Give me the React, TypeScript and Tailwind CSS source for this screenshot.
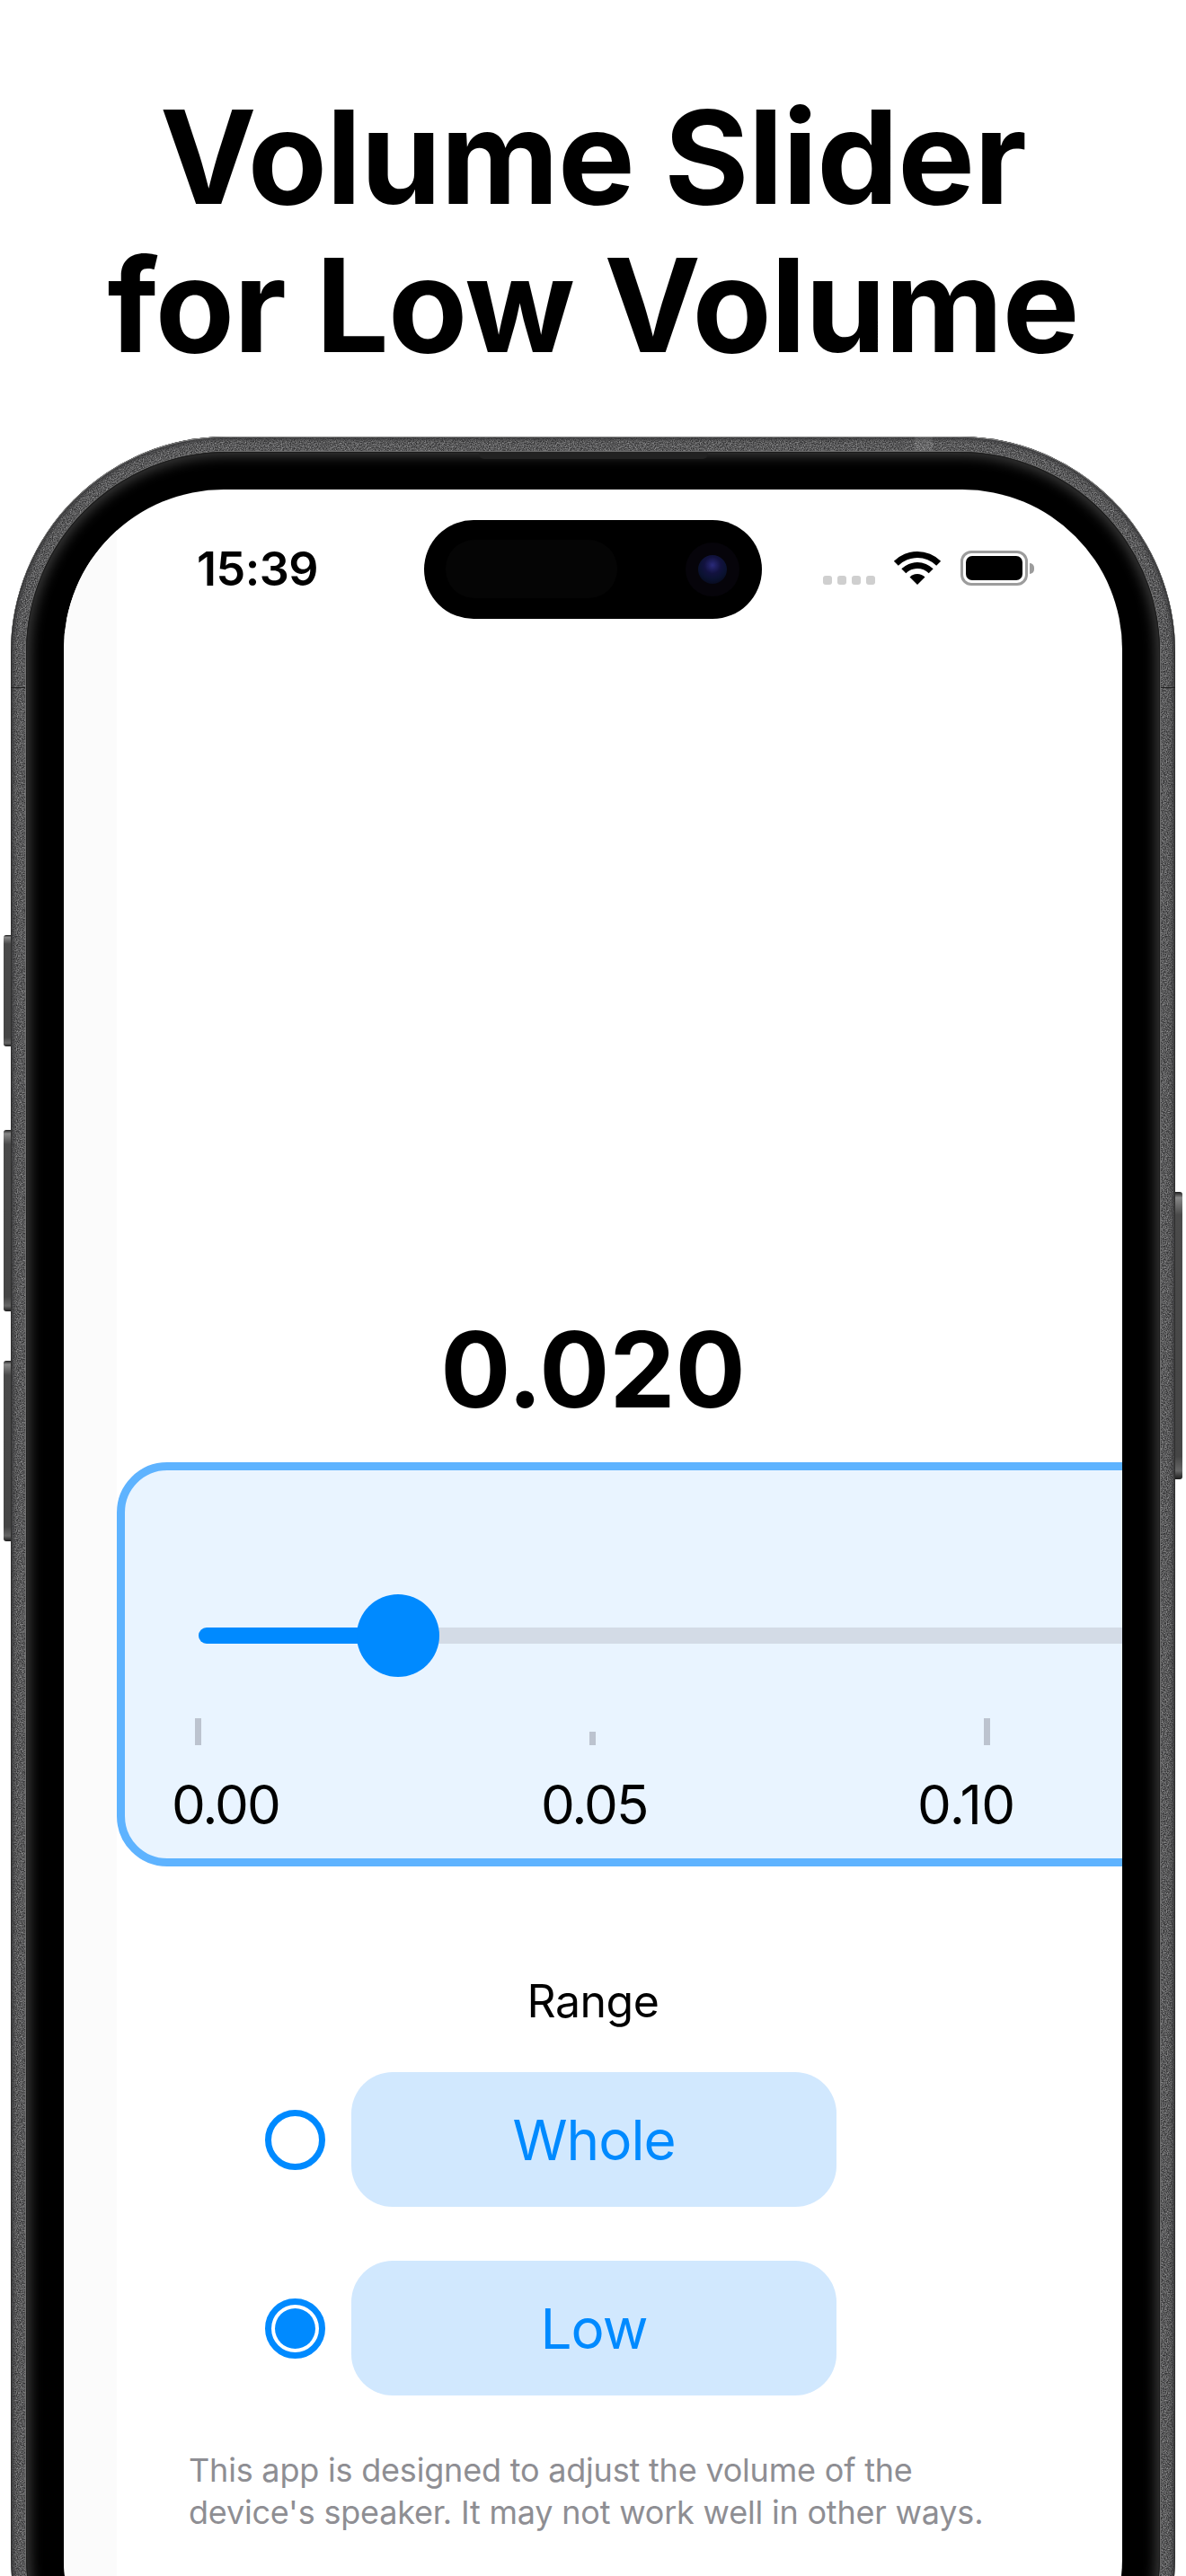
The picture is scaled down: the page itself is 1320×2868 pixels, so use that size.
import React from 'react'

const sideButton = 'absolute w-[9px] bg-[linear-gradient(to_bottom,#1c1c1c_0%,#888_2%,#4a4a4a_8%,#454545_92%,#666_97%,#1c1c1c_100%)]'

const WifiIcon = () => (
  <svg viewBox="0 0 50 37" className="w-[50px] h-[37px] overflow-visible" fill="#000">
    <path d="M-1.16 10.84A37 37 0 0 1 51.16 10.84L46.2 15.8A30 30 0 0 0 3.8 15.8Z" />
    <path d="M7.32 19.32A25 25 0 0 1 42.68 19.32L37.73 24.27A18 18 0 0 0 12.27 24.27Z" />
    <path d="M16.51 28.51A12 12 0 0 1 33.49 28.51L25 37Z" />
  </svg>
)

const Battery = () => (
  <div className="flex items-center gap-[2px]">
    <div className="w-[75px] h-[39px] rounded-[12px] border-[3px] border-[#9c9c9c] p-[3px]">
      <div className="w-full h-full rounded-[7px] bg-black" />
    </div>
    <div className="w-[5px] h-[12px] rounded-r-full bg-[#9c9c9c]" />
  </div>
)

const Option = ({ label, selected }: { label: string; selected?: boolean }) => (
  <div className="flex items-center gap-[29px] pl-[165px]">
    <div className="w-[67px] h-[67px] rounded-full border-[7px] border-[#008aff] bg-white p-[4px]">
      {selected && <div className="w-full h-full rounded-full bg-[#008aff]" />}
    </div>
    <div className="w-[540px] h-[150px] rounded-[46px] bg-[#d1e8fe] flex items-center justify-center text-[62px] tracking-[-1px] text-[#008aff]">
      {label}
    </div>
  </div>
)

export default function App() {
  return (
    <div className="h-[2868px] overflow-hidden bg-white pt-[92px] font-['Inter',sans-serif] text-black">
      <h1 className="text-center text-[144px] leading-[165px] font-bold tracking-[-0.8px]">
        Volume Slider
        <br />
        for Low Volume
      </h1>

      {/* phone */}
      <div className="relative mx-auto mt-[64px] w-[1296px] h-[2600px] rounded-[240px] bg-[#5a5a5c] p-[17px]">
        <div className={`${sideButton} left-[-8px] top-[555px] h-[124px] rounded-l-[3px]`} />
        <div className={`${sideButton} left-[-8px] top-[772px] h-[202px] rounded-l-[3px]`} />
        <div className={`${sideButton} left-[-8px] top-[1029px] h-[201px] rounded-l-[3px]`} />
        <div className={`${sideButton} right-[-8px] top-[841px] h-[320px] rounded-r-[3px]`} />

        {/* metal grain */}
        <div className="absolute inset-0 overflow-hidden rounded-[240px]">
          <svg className="w-full h-full">
            <filter id="grain" colorInterpolationFilters="sRGB">
              <feTurbulence type="fractalNoise" baseFrequency="0.8" numOctaves="2" />
              <feColorMatrix values="1.6 0 0 0 -0.45 1.6 0 0 0 -0.45 1.6 0 0 0 -0.45 0 0 0 0 0.45" />
            </filter>
            <rect width="100%" height="100%" filter="url(#grain)" />
          </svg>
        </div>
        <div className="absolute inset-0 rounded-[240px] shadow-[inset_0_1px_0_#8c8c8c,inset_0_0_0_1px_#303030,inset_0_0_4px_3px_#38383a]" />
        <div className="absolute left-[1006px] top-0 w-[20px] h-[17px] bg-[#ffffff18]" />
        <div className="absolute left-0 top-[279px] w-[17px] h-[1px] bg-[#222]" />
        <div className="absolute right-0 top-[279px] w-[17px] h-[1px] bg-[#222]" />

        <div className="relative h-full rounded-[223px] bg-black p-[42px] shadow-[0_0_0_1px_#6e6e6e,inset_0_0_0_1px_#1c1c1c,inset_0_0_14px_5px_#3a3a3a]">
          <div className="absolute left-[504px] top-0 w-[255px] h-[8px] rounded-b-[6px] bg-[#222]" />

          {/* screen */}
          <div className="relative flex h-full overflow-hidden rounded-[178px] bg-white">
            <div className="w-[59px] shrink-0 bg-[#fbfbfb]" />

            <div className="w-[1060px] shrink-0">
              <div className="flex h-[107px] items-end pl-[89px]">
                <span className="mb-[-8px] w-[697px] text-[52px] leading-[52px] font-semibold tracking-[-0.5px]">15:39</span>
                <div className="mb-[1px] flex gap-[6px]">
                  <div className="w-[10px] h-[10px] rounded-[3px] bg-[#cfcfcf]" />
                  <div className="w-[10px] h-[10px] rounded-[3px] bg-[#cfcfcf]" />
                  <div className="w-[10px] h-[10px] rounded-[3px] bg-[#cfcfcf]" />
                  <div className="w-[10px] h-[10px] rounded-[3px] bg-[#cfcfcf]" />
                </div>
                <div className="ml-[22px] mb-[1px]"><WifiIcon /></div>
                <div className="ml-[23px]"><Battery /></div>
              </div>

              <div className="mt-[817px] text-center text-[116px] leading-[112px] font-bold">0.020</div>

              {/* slider panel */}
              <div className="mt-[47px] h-[450px] w-[1300px] rounded-[56px] border-[9px] border-[#5eb3ff] bg-[#e9f4ff] pl-[82px] pt-[175px]">
                <div className="relative h-[18px] w-[1200px] rounded-full bg-[#d3dbe6]">
                  <div className="absolute left-0 top-0 h-[18px] w-[222px] rounded-full bg-[#008aff]" />
                  <div className="absolute left-[176px] top-[-37px] h-[92px] w-[92px] rounded-full bg-[#008aff]" />
                </div>
                <div className="ml-[-4px] mt-[83px] flex h-[30px] items-end gap-[432px]">
                  <div className="h-[30px] w-[7px] bg-[#bcc3cf]" />
                  <div className="h-[15px] w-[7px] bg-[#bcc3cf]" />
                  <div className="h-[30px] w-[7px] bg-[#bcc3cf]" />
                </div>
                <div className="ml-[-30px] mt-[36px] flex text-[60px] leading-[60px] tracking-[-2px]">
                  <span className="w-[411px]">0.00</span>
                  <span className="w-[419px]">0.05</span>
                  <span className="tracking-[-0.5px]">0.10</span>
                </div>
              </div>

              <div className="mt-[120px] text-center text-[50px] leading-[60px] tracking-[-0.5px]">Range</div>

              <div className="mt-[49px] flex flex-col gap-[60px]">
                <Option label="Whole" />
                <Option label="Low" selected />
              </div>

              <p className="mt-[60px] pl-[80px] text-[36px] leading-[47px] tracking-[-0.2px] text-[#8e8e93] whitespace-nowrap">
                This app is designed to adjust the volume of the
                <br />
                device's speaker. It may not work well in other ways.
              </p>
            </div>

            {/* dynamic island */}
            <div className="absolute left-[401px] top-[34px] h-[110px] w-[376px] rounded-[55px] bg-black">
              <div className="absolute left-[24px] top-[22px] h-[65px] w-[191px] rounded-[32px] bg-[#050505]" />
              <div className="absolute left-[291px] top-[25px] h-[60px] w-[60px] rounded-full bg-[#06040a]" />
              <div className="absolute left-[305px] top-[39px] h-[32px] w-[32px] rounded-full bg-[radial-gradient(circle_at_50%_35%,#2a2a7a_0%,#12123f_35%,#0a1230_60%,#05050f_100%)]" />
            </div>
          </div>
        </div>
      </div>
    </div>
  )
}
